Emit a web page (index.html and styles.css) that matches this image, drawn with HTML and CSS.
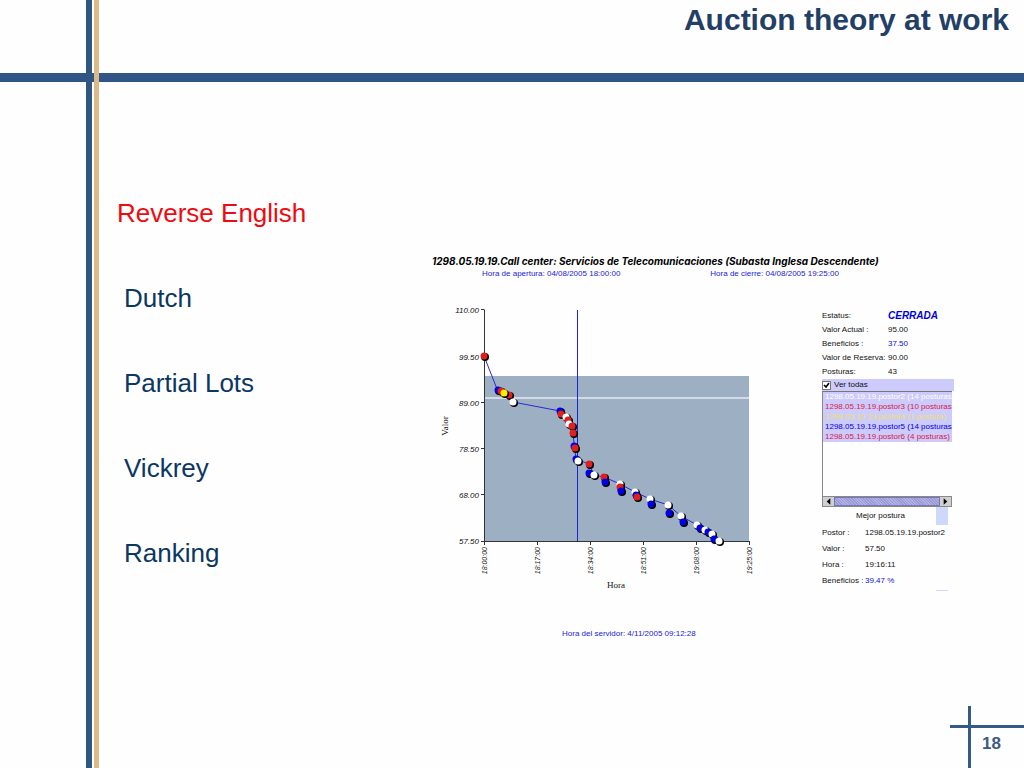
FILE: index.html
```
<!DOCTYPE html>
<html lang="en">
<head>
    <meta charset="UTF-8">
    <meta name="viewport" content="width=device-width, initial-scale=1.0">
    <title>Auction theory at work</title>
    <link rel="stylesheet" href="styles.css">
</head>
<body>
    <div class="slide">
        <header class="slide-header">
            <h1>Auction theory at work</h1>
        </header>

        <main class="content">
            <ul class="types">
                <li class="current">Reverse English</li>
                <li>Dutch</li>
                <li>Partial Lots</li>
                <li>Vickrey</li>
                <li>Ranking</li>
            </ul>

            <section class="auction" lang="es">
                <h2>1298.05.19.19.Call center: Servicios de Telecomunicaciones (Subasta Inglesa Descendente)</h2>
                <div class="times">
                    <span>Hora de apertura: 04/08/2005 18:00:00</span>
                    <span>Hora de cierre: 04/08/2005 19:25:00</span>
                </div>

                <div class="auction-body">
                    <svg class="chart" viewBox="0 0 330 292" role="img" aria-label="Valor / Hora">
                        <defs>
                            <g id="red"><circle cx="1" cy="1" r="4"/><circle r="3.5" fill="#e02020"/></g>
                            <g id="blue"><circle cx="1" cy="1" r="4"/><circle r="3.5" fill="#0000e0"/></g>
                            <g id="white"><circle cx="1" cy="1" r="4"/><circle r="3.5" fill="#fff"/></g>
                            <g id="yellow"><circle cx="1" cy="1" r="4"/><circle r="3.5" fill="#ffee00"/></g>
                        </defs>
                        <g transform="translate(52 10)">
                            <rect x="0" y="66" width="265" height="165" fill="#9dafc3"/>
                            <rect x="0" y="87" width="265" height="2" fill="#d3dce6"/>

                            <!-- axes -->
                            <path class="axis" d="M0.5 -0.5V231.5H265.5M-3 -0.5H0M-3 46.5H0M-3 92.5H0M-3 138.5H0M-3 184.5H0M-3 231.5H0M0.5 231V235M53.5 231V235M106.5 231V235M159.5 231V235M212.5 231V235M265.5 231V235"/>
                            <g class="label" text-anchor="end">
                                <text x="-5" y="3">110.00</text>
                                <text x="-5" y="50">99.50</text>
                                <text x="-5" y="96">89.00</text>
                                <text x="-5" y="142">78.50</text>
                                <text x="-5" y="188">68.00</text>
                                <text x="-5" y="234">57.50</text>
                            </g>
                            <g class="label hours" text-anchor="end">
                                <text transform="translate(3 237) rotate(-90)">18:00:00</text>
                                <text transform="translate(56 237) rotate(-90)">18:17:00</text>
                                <text transform="translate(109 237) rotate(-90)">18:34:00</text>
                                <text transform="translate(162 237) rotate(-90)">18:51:00</text>
                                <text transform="translate(215 237) rotate(-90)">19:08:00</text>
                                <text transform="translate(268 237) rotate(-90)">19:25:00</text>
                            </g>
                            <text class="axis-name" x="132" y="278" text-anchor="middle">Hora</text>
                            <text class="axis-name" transform="translate(-36 116) rotate(-90)" text-anchor="middle">Valor</text>

                            <!-- bids -->
                            <rect x="93" y="0" width="1" height="231" fill="#2020e0"/>
                            <polyline class="trend" points="0,46 13,79 20,83 29,92 76,101 88,116 92,149 105,154 110,165 120,167 136,174 151,182 166,189 184,195 197,206 213,215 228,224 236,231"/>
                            <use href="#red" x="0" y="46"/>
                            <use href="#blue" x="14" y="80"/>
                            <use href="#red" x="17" y="81"/>
                            <use href="#red" x="25" y="85"/>
                            <use href="#yellow" x="20" y="83"/>
                            <use href="#white" x="29" y="92"/>
                            <use href="#blue" x="76" y="101"/>
                            <use href="#red" x="77" y="104"/>
                            <use href="#white" x="82" y="107"/>
                            <use href="#red" x="84" y="110"/>
                            <use href="#white" x="85" y="114"/>
                            <use href="#red" x="88" y="116"/>
                            <use href="#red" x="89" y="123"/>
                            <use href="#blue" x="90" y="136"/>
                            <use href="#red" x="91" y="138"/>
                            <use href="#blue" x="92" y="149"/>
                            <use href="#white" x="94" y="151"/>
                            <use href="#red" x="105" y="154"/>
                            <use href="#blue" x="105" y="163"/>
                            <use href="#white" x="110" y="165"/>
                            <use href="#red" x="120" y="167"/>
                            <use href="#blue" x="121" y="172"/>
                            <use href="#white" x="136" y="174"/>
                            <use href="#red" x="136" y="177"/>
                            <use href="#blue" x="137" y="181"/>
                            <use href="#white" x="151" y="182"/>
                            <use href="#blue" x="152" y="185"/>
                            <use href="#red" x="153" y="187"/>
                            <use href="#white" x="166" y="189"/>
                            <use href="#blue" x="167" y="194"/>
                            <use href="#white" x="184" y="195"/>
                            <use href="#blue" x="185" y="203"/>
                            <use href="#white" x="197" y="206"/>
                            <use href="#blue" x="199" y="212"/>
                            <use href="#white" x="213" y="215"/>
                            <use href="#blue" x="216" y="218"/>
                            <use href="#white" x="221" y="220"/>
                            <use href="#blue" x="224" y="222"/>
                            <use href="#white" x="228" y="224"/>
                            <use href="#blue" x="230" y="229"/>
                            <use href="#white" x="235" y="231"/>
                        </g>
                    </svg>

                    <aside class="panel">
                        <dl class="summary">
                            <dt>Estatus:</dt><dd class="status">CERRADA</dd>
                            <dt>Valor Actual :</dt><dd>95.00</dd>
                            <dt>Beneficios :</dt><dd class="blue">37.50</dd>
                            <dt>Valor de Reserva:</dt><dd>90.00</dd>
                            <dt>Posturas:</dt><dd>43</dd>
                        </dl>

                        <label class="show-all"><input type="checkbox" checked> Ver todas</label>
                        <ul class="bidders">
                            <li class="b-white">1298.05.19.19.postor2 (14 posturas</li>
                            <li class="b-red">1298.05.19.19.postor3 (10 posturas</li>
                            <li class="b-yellow">1298.05.19.19.postor4 (1 postura)</li>
                            <li class="b-blue">1298.05.19.19.postor5 (14 posturas</li>
                            <li class="b-red">1298.05.19.19.postor6 (4 posturas)</li>
                        </ul>
                        <div class="scrollbar">
                            <button type="button" aria-label="Izquierda"><svg viewBox="0 0 12 10"><path d="M4 5L8 1.5V8.5Z"/></svg></button>
                            <div class="thumb"></div>
                            <button type="button" aria-label="Derecha"><svg viewBox="0 0 12 10"><path d="M8 5L4 1.5V8.5Z"/></svg></button>
                        </div>

                        <h3>Mejor postura</h3>
                        <dl class="best">
                            <dt>Postor :</dt><dd>1298.05.19.19.postor2</dd>
                            <dt>Valor :</dt><dd>57.50</dd>
                            <dt>Hora :</dt><dd>19:16:11</dd>
                            <dt>Beneficios :</dt><dd class="blue">39.47 %</dd>
                        </dl>
                    </aside>
                </div>

                <p class="server-time">Hora del servidor: 4/11/2005 09:12:28</p>
            </section>
        </main>

        <footer class="slide-footer">
            <span class="page-number">18</span>
        </footer>
    </div>
</body>
</html>
```
FILE: styles.css
```
* {
    box-sizing: border-box;
}
body {
    margin: 0;
    font-family: "Liberation Sans", Arial, sans-serif;
    background: #fefefe;
}
ul, dl, dd, h1, h2, h3, p {
    margin: 0;
    padding: 0;
    list-style: none;
}

/* slide frame: tan line, blue column, blue bar */
.slide {
    display: flex;
    flex-direction: column;
    min-height: 100vh;
    background:
        linear-gradient(#dbb989, #dbb989) 94px 0 / 5px 100% no-repeat,
        linear-gradient(#305682, #305682) 86px 0 / 6px 100% no-repeat,
        linear-gradient(#305586, #305586) 0 73px / 100% 9px no-repeat;
}
.slide-header {
    height: 82px;
    padding: 2px 15px 0;
    text-align: right;
}
.slide-header h1 {
    font-size: 30px;
    line-height: 35px;
    color: #243f66;
}

.content {
    flex: 1;
    display: grid;
    grid-template-columns: 1fr 522px;
    align-items: start;
    padding: 116px 70px 0 117px;
}
.types {
    display: grid;
    gap: 55px;
    padding-left: 7px;
    font-size: 26px;
    line-height: 30px;
    color: #0b3762;
}
.types .current {
    margin-left: -7px;
    color: #ee0a10;
}

/* auction window */
.auction {
    padding-top: 57px;
    font-size: 8px;
    line-height: 14px;
    color: #111;
}
.auction h2 {
    font-family: Inter, "Liberation Sans", sans-serif;
    font-size: 10px;
    line-height: 12px;
    font-style: italic;
    white-space: nowrap;
    color: #000;
}
.times {
    display: flex;
    gap: 90px;
    padding-left: 50px;
    color: #1a1ad8;
}
.auction-body {
    display: flex;
    justify-content: space-between;
    margin-top: 19px;
}
.chart {
    width: 330px;
    height: 292px;
    overflow: visible;
}
.axis {
    fill: none;
    stroke: #333;
}
.label {
    font-size: 8px;
    font-style: italic;
    fill: #111;
}
.hours {
    font-size: 7px;
}
.axis-name {
    font-family: "Liberation Serif", "Times New Roman", serif;
    font-size: 9px;
    fill: #111;
}
.trend {
    fill: none;
    stroke: #2a2ad4;
}

.panel {
    width: 132px;
    padding-top: 9px;
    white-space: nowrap;
}
.summary {
    display: grid;
    grid-template-columns: 66px 1fr;
    grid-auto-rows: 14px;
}
.summary .status {
    font-size: 10px;
    font-weight: bold;
    font-style: italic;
    color: #0000dd;
}
.blue {
    color: #1010d8;
}
.show-all {
    display: flex;
    align-items: center;
    gap: 3px;
    height: 12px;
    background: #cdcbfb;
}
.show-all input {
    appearance: none;
    width: 9px;
    height: 9px;
    margin: 0;
    border: 1px solid #777;
    background: #fff;
}
.show-all input:checked {
    background: #fff url("data:image/svg+xml,%3Csvg xmlns='http://www.w3.org/2000/svg' viewBox='0 0 7 7'%3E%3Cpath d='M1 3L3 5L6 1' fill='none' stroke='black' stroke-width='1.6'/%3E%3C/svg%3E") center / 7px 7px no-repeat;
}
.bidders {
    width: 130px;
    height: 105px;
    border-top: 1px solid #777;
    border-left: 1px solid #888;
    line-height: 10px;
    overflow: hidden;
}
.bidders li {
    height: 10px;
    padding-left: 2px;
    background: #cdcbfb;
}
.b-white { color: #fff; }
.b-red { color: #d81848; }
.b-yellow { color: #ece45a; }
.b-blue { color: #0000e0; }

.scrollbar {
    display: flex;
    width: 130px;
    height: 11px;
    border: 1px solid #888;
    background: #ccc;
}
.scrollbar button {
    width: 11px;
    padding: 0;
    border: 0;
    background: #d0d0d0;
}
.scrollbar svg {
    display: block;
    width: 11px;
    height: 9px;
}
.thumb {
    flex: 1;
    border: 1px solid #7777b8;
    background: repeating-linear-gradient(45deg, #9c9ad6 0 1px, #b3b1e4 1px 2px);
}
.panel h3 {
    height: 18px;
    padding-left: 34px;
    font-size: 8px;
    line-height: 18px;
    font-weight: normal;
    background: linear-gradient(#cdd8fa, #cdd8fa) 114px 0 / 12px 100% no-repeat;
}
.best {
    display: grid;
    grid-template-columns: 43px 1fr;
    grid-auto-rows: 16px;
    padding-bottom: 2px;
    line-height: 16px;
    background: linear-gradient(#cdd8fa, #cdd8fa) 114px 100% / 12px 1px no-repeat;
}
.server-time {
    margin-top: 35px;
    padding-left: 130px;
    color: #1a1ad8;
}

/* page number corner */
.slide-footer {
    align-self: flex-end;
    width: 74px;
    height: 62px;
    padding: 28px 0 0 32px;
    background:
        linear-gradient(#365a88, #365a88) 18px 0 / 3px 100% no-repeat,
        linear-gradient(#365a88, #365a88) 0 19px / 100% 3px no-repeat;
}
.page-number {
    font-size: 17px;
    line-height: 20px;
    font-weight: bold;
    color: #3c5a88;
}
```
